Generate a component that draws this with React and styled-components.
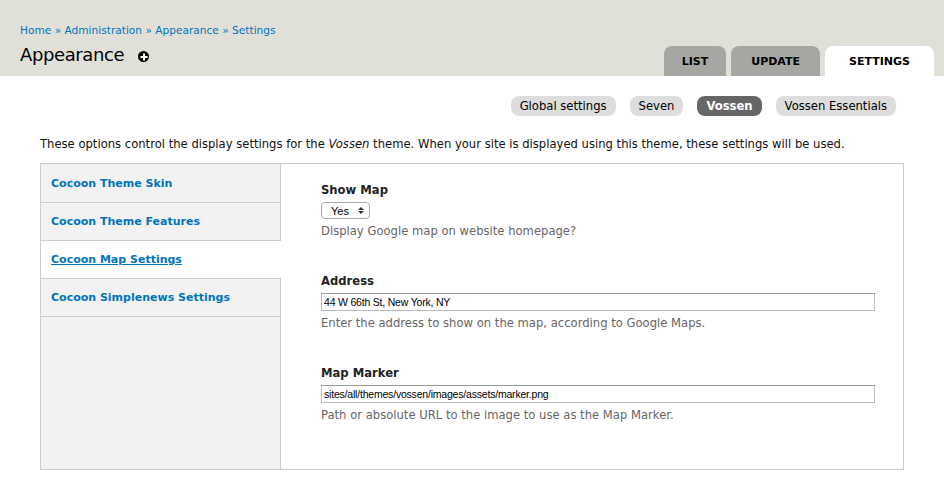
import React from 'react';
import styled, {createGlobalStyle} from 'styled-components';

const GlobalStyle = createGlobalStyle`
    body {
        margin: 0;
        background: #fff;
        font-family: "DejaVu Sans", "Lucida Grande", Verdana, sans-serif;
        font-size: 13px;
        color: #333;
    }
`;

const Header = styled.div`
    background: #e0e0d8;
    height: 76px;
    padding: 0 10px 0 20px;
    display: flex;
    justify-content: space-between;
    align-items: flex-end;
    box-sizing: border-box;
`;

const TitleBlock = styled.div`
    align-self: stretch;
    padding-top: 24px;
`;

const Breadcrumb = styled.div`
    font-size: 10.6px;
    color: #0074bd;
    a { color: #0074bd; text-decoration: none; }
`;

const PageTitle = styled.h1`
    margin: 8px 0 0;
    font-size: 18px;
    letter-spacing: -0.4px;
    font-weight: normal;
    color: #000;
    display: flex;
    align-items: center;
    gap: 14px;
`;

const PlusIcon = styled.span`
    width: 11px;
    height: 11px;
    border-radius: 50%;
    background: #000;
    position: relative;
    margin-top: 4px;
    &::before, &::after {
        content: "";
        position: absolute;
        background: #fff;
        left: 50%;
        top: 50%;
        transform: translate(-50%, -50%);
    }
    &::before { width: 7px; height: 2px; }
    &::after { width: 2px; height: 7px; }
`;

const Tabs = styled.div`
    display: flex;
    gap: 5px;
`;

const Tab = styled.div`
    height: 30px;
    padding: 0 ${p => p.$pad}px;
    display: flex;
    align-items: center;
    border-radius: 8px 8px 0 0;
    font-size: 11px;
    font-weight: bold;
    color: #000;
    background: ${p => p.$active ? '#fff' : '#a6a7a2'};
`;

const Body = styled.div`
    padding: 20px 40px 0;
`;

const SubTabs = styled.div`
    display: flex;
    justify-content: flex-end;
    gap: 14px;
    padding-right: 8px;
`;

const Pill = styled.div`
    height: 20px;
    padding: 0 9px;
    display: flex;
    align-items: center;
    border-radius: 8px;
    font-size: 11.6px;
    background: ${p => p.$active ? '#666' : '#ddd'};
    color: ${p => p.$active ? '#fff' : '#000'};
    font-weight: ${p => p.$active ? 'bold' : 'normal'};
`;

const Intro = styled.p`
    margin: 21px 0 12px;
    font-size: 11.6px;
    color: #111;
`;

const VerticalTabs = styled.div`
    display: flex;
    border: 1px solid #ccc;
    height: 307px;
    width: 864px;
    box-sizing: border-box;
`;

const Menu = styled.div`
    width: 240px;
    box-sizing: border-box;
    background: #f2f2f2;
    border-right: 1px solid #ccc;
    flex-shrink: 0;
    padding-top: 1px;
`;

const MenuItem = styled.div`
    height: 37px;
    border-bottom: 1px solid #ccc;
    background: ${p => p.$active ? '#fff' : 'transparent'};
    margin-right: ${p => p.$active ? '-1px' : '0'};
    display: flex;
    align-items: center;
    padding-left: 10px;
    font-size: 11px;
    font-weight: bold;
    color: #0074bd;
    text-decoration: ${p => p.$active ? 'underline' : 'none'};
`;

const Pane = styled.div`
    padding: 19px 0 0 40px;
    flex: 1;
`;

const Field = styled.div`
    margin-bottom: 36px;
`;

const Label = styled.div`
    font-size: 11.6px;
    font-weight: bold;
    color: #222;
    margin-bottom: 5px;
`;

const Select = styled.div`
    width: 49px;
    height: 17px;
    border: 1px solid #aaa;
    border-radius: 4px;
    box-sizing: border-box;
    display: flex;
    align-items: center;
    justify-content: space-between;
    padding: 0 5px 0 9px;
    font-family: "Liberation Sans", Arial, sans-serif;
    font-size: 11px;
    color: #000;
`;

const Arrows = styled.span`
    display: flex;
    flex-direction: column;
    gap: 1px;
    &::before, &::after {
        content: "";
        border-left: 3px solid transparent;
        border-right: 3px solid transparent;
    }
    &::before { border-bottom: 3px solid #333; }
    &::after { border-top: 3px solid #333; }
`;

const TextInput = styled.div`
    width: 554px;
    height: 18px;
    border: 1px solid #bbb;
    border-top-color: #999;
    box-sizing: border-box;
    padding: 0 2px;
    display: flex;
    align-items: center;
    font-family: "Liberation Sans", Arial, sans-serif;
    font-size: 10.5px;
    letter-spacing: -0.2px;
    color: #000;
`;

const Description = styled.div`
    margin-top: 5px;
    font-size: 11.6px;
    color: #666;
`;

export default function App() {
    return (
        <>
            <GlobalStyle/>
            <Header>
                <TitleBlock>
                    <Breadcrumb>
                        <a>Home</a> » <a>Administration</a> » <a>Appearance</a> » <a>Settings</a>
                    </Breadcrumb>
                    <PageTitle>Appearance <PlusIcon/></PageTitle>
                </TitleBlock>
                <Tabs>
                    <Tab $pad={18}>LIST</Tab>
                    <Tab $pad={20}>UPDATE</Tab>
                    <Tab $pad={24} $active>SETTINGS</Tab>
                </Tabs>
            </Header>
            <Body>
                <SubTabs>
                    <Pill>Global settings</Pill>
                    <Pill>Seven</Pill>
                    <Pill $active>Vossen</Pill>
                    <Pill>Vossen Essentials</Pill>
                </SubTabs>
                <Intro>
                    These options control the display settings for the <em>Vossen</em> theme. When your site is displayed using this theme, these settings will be used.
                </Intro>
                <VerticalTabs>
                    <Menu>
                        <MenuItem>Cocoon Theme Skin</MenuItem>
                        <MenuItem>Cocoon Theme Features</MenuItem>
                        <MenuItem $active>Cocoon Map Settings</MenuItem>
                        <MenuItem>Cocoon Simplenews Settings</MenuItem>
                    </Menu>
                    <Pane>
                        <Field>
                            <Label>Show Map</Label>
                            <Select>Yes <Arrows/></Select>
                            <Description>Display Google map on website homepage?</Description>
                        </Field>
                        <Field>
                            <Label>Address</Label>
                            <TextInput>44 W 66th St, New York, NY</TextInput>
                            <Description>Enter the address to show on the map, according to Google Maps.</Description>
                        </Field>
                        <Field>
                            <Label>Map Marker</Label>
                            <TextInput>sites/all/themes/vossen/images/assets/marker.png</TextInput>
                            <Description>Path or absolute URL to the image to use as the Map Marker.</Description>
                        </Field>
                    </Pane>
                </VerticalTabs>
            </Body>
        </>
    );
}
